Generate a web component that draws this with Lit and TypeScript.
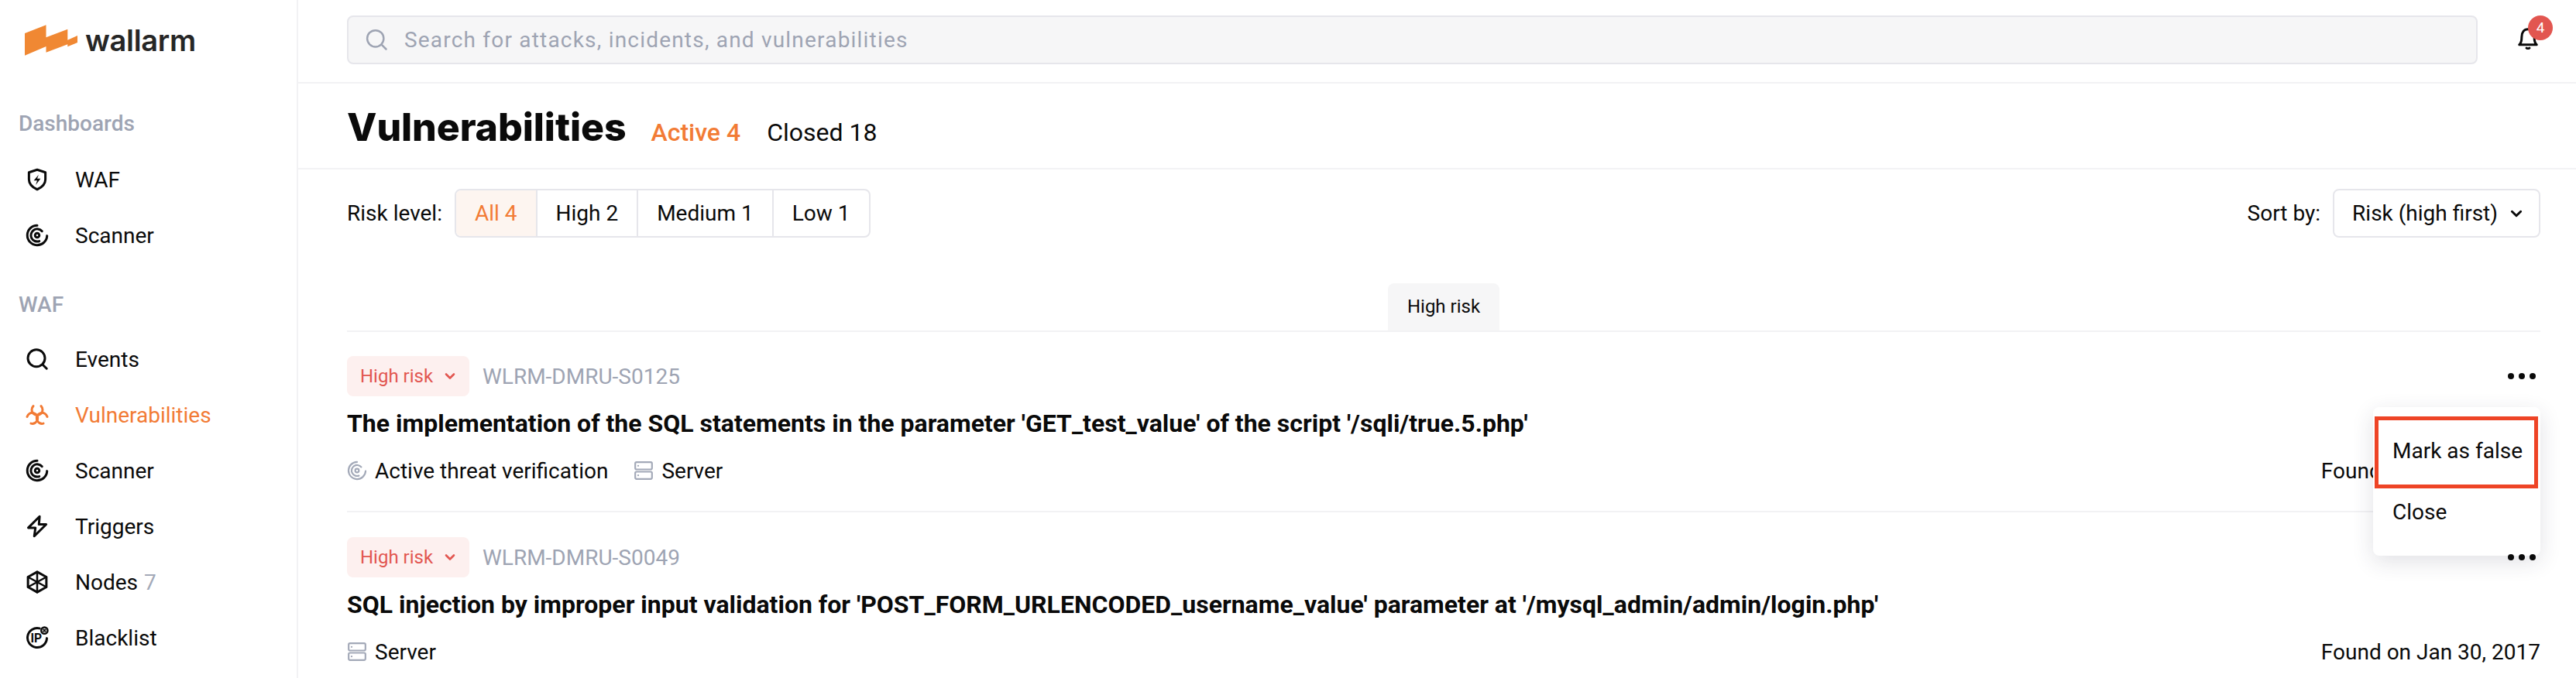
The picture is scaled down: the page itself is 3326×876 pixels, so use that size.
import { LitElement, html, css, svg } from "lit";
import { customElement } from "lit/decorators.js";

const stroke = (body: unknown, size = 30, width = 2.4) => html`<svg
  width=${size} height=${size} viewBox="0 0 24 24" fill="none" stroke="currentColor"
  stroke-width=${width} stroke-linecap="round" stroke-linejoin="round">${body}</svg>`;

const scannerShape = svg`
  <path d="M12 1.8A10.2 10.2 0 1 0 22.2 12.5" />
  <path d="M17 7.8A6.5 6.5 0 1 0 14.2 18.1" />
  <circle cx="12" cy="12" r="2.2" />`;

const serverShape = svg`
  <rect x="2" y="2" width="20" height="8.6" rx="1.6" />
  <rect x="2" y="13.4" width="20" height="8.6" rx="1.6" />
  <path d="M5.5 6.3h.1M5.5 17.7h.1" />`;

const lobe = "M8 2.9A5.6 5.6 0 1 0 16 2.9";

const icons = {
  shield: stroke(svg`
    <path d="M12 1.8l8.5 2.8v7.2c0 4.6-3.4 8.2-8.5 10.4-5.1-2.2-8.5-5.8-8.5-10.4V4.6z" />
    <path d="M13.5 7l-5 6H12l-1.5 4.5 5-6.5H12z" fill="currentColor" stroke="none" />`),
  scanner: stroke(scannerShape),
  search: stroke(svg`<circle cx="11.2" cy="11" r="8.8" /><path d="M17.8 17.8l4 4" />`),
  bio: stroke(svg`
    <path d=${lobe} />
    <path d=${lobe} transform="rotate(120 12 12.6)" />
    <path d=${lobe} transform="rotate(240 12 12.6)" />`),
  triggers: stroke(svg`<path d="M14.5 1.8L2.8 13.5h7.4L9 22.2 21.3 10h-7.5z" />`),
  nodes: stroke(svg`
    <path d="M12 1.5l9.5 5.3v10.4L12 22.5l-9.5-5.3V6.8z" />
    <path d="M12 1.5v21M2.5 6.8l19 10.4M21.5 6.8l-19 10.4" stroke-width="2" />`),
  blacklist: stroke(svg`
    <path d="M14.5 2.3A10 10 0 1 0 22 12.5" />
    <text x="11" y="16.5" text-anchor="middle" fill="currentColor" stroke="none"
      font-family="Roboto, sans-serif" font-size="12.5" font-weight="700">IP</text>
    <circle cx="19.5" cy="4.5" r="3.3" stroke-width="2" />
    <path d="M18.5 3.5l2 2M20.5 3.5l-2 2" stroke-width="1.5" />`),
};

const chevron = (size: number) => html`<svg width=${size} height=${size} viewBox="0 0 16 16"
  fill="none" stroke="currentColor" stroke-width="2.6" stroke-linecap="round" stroke-linejoin="round">
  <path d="M3 5.5l5 5 5-5" /></svg>`;

const navGroups = [
  {
    title: "Dashboards",
    items: [
      { icon: icons.shield, label: "WAF" },
      { icon: icons.scanner, label: "Scanner" },
    ],
  },
  {
    title: "WAF",
    items: [
      { icon: icons.search, label: "Events" },
      { icon: icons.bio, label: "Vulnerabilities", active: true },
      { icon: icons.scanner, label: "Scanner" },
      { icon: icons.triggers, label: "Triggers" },
      { icon: icons.nodes, label: "Nodes", count: "7" },
      { icon: icons.blacklist, label: "Blacklist" },
    ],
  },
];

const filters = ["All 4", "High 2", "Medium 1", "Low 1"];

const rows = [
  {
    id: "WLRM-DMRU-S0125",
    title: "The implementation of the SQL statements in the parameter 'GET_test_value' of the script '/sqli/true.5.php'",
    tags: [
      { shape: scannerShape, label: "Active threat verification" },
      { shape: serverShape, label: "Server" },
    ],
    found: "Found on Jan 30, 2017",
    menu: true,
  },
  {
    id: "WLRM-DMRU-S0049",
    title: "SQL injection by improper input validation for 'POST_FORM_URLENCODED_username_value' parameter at '/mysql_admin/admin/login.php'",
    tags: [{ shape: serverShape, label: "Server" }],
    found: "Found on Jan 30, 2017",
    menu: false,
  },
];

@customElement("app-root")
export class AppRoot extends LitElement {
  static styles = css`
    :host {
      display: flex;
      width: 3326px;
      height: 876px;
      overflow: hidden;
      background: #fff;
      color: #0a0a0a;
      font-family: Roboto, "Liberation Sans", sans-serif;
      font-size: 28px;
    }
    .sidebar {
      flex: none;
      box-sizing: border-box;
      width: 385px;
      border-right: 2px solid #f2f2f4;
    }
    .logo {
      display: flex;
      align-items: flex-start;
      gap: 10px;
      padding: 32px 0 0 32px;
      height: 110px;
      box-sizing: border-box;
    }
    .logo-text {
      font-family: Inter, sans-serif;
      font-weight: 600;
      font-size: 38px;
      line-height: 40px;
      letter-spacing: -0.3px;
      color: #262626;
    }
    .group-title {
      padding-left: 24px;
      margin-top: 32px;
      height: 36px;
      line-height: 36px;
      font-weight: 500;
      color: #9ea4b3;
    }
    .group + .group .group-title {
      margin-top: 36px;
    }
    .nav {
      display: flex;
      flex-direction: column;
      margin-top: 18px;
    }
    .group + .group .nav {
      margin-top: 16px;
    }
    .nav-item {
      display: flex;
      align-items: center;
      height: 72px;
      padding-left: 33px;
      gap: 34px;
    }
    .nav-item.active {
      color: #f27b35;
    }
    .nav-count {
      color: #a3a9b8;
      margin-left: 8px;
    }
    .main {
      flex: 1;
      min-width: 0;
    }
    .topbar {
      display: flex;
      align-items: center;
      box-sizing: border-box;
      height: 108px;
      padding: 0 47px 4px 63px;
      border-bottom: 2px solid #f2f2f4;
    }
    .search {
      flex: 1;
      display: flex;
      align-items: center;
      gap: 21px;
      box-sizing: border-box;
      height: 63px;
      padding-left: 21px;
      background: #f6f6f7;
      border: 2px solid #e6e6eb;
      border-radius: 8px;
      color: #9ea4b3;
      letter-spacing: 1.2px;
    }
    .bell {
      position: relative;
      display: flex;
      margin: 0 0 5px 50px;
    }
    .badge {
      position: absolute;
      top: -14px;
      right: -17px;
      width: 32px;
      height: 32px;
      border-radius: 50%;
      background: #e25650;
      color: #fff;
      font-size: 19px;
      line-height: 32px;
      text-align: center;
    }
    .titlebar {
      display: flex;
      align-items: baseline;
      box-sizing: border-box;
      height: 111px;
      padding: 26px 0 0 63px;
      border-bottom: 2px solid #f2f2f4;
    }
    h1 {
      margin: 0 32px 0 0;
      font-family: Inter, sans-serif;
      font-size: 50px;
      font-weight: 800;
      line-height: 60px;
      letter-spacing: -0.1px;
    }
    .tab-link {
      font-size: 32px;
      margin-right: 34px;
    }
    .tab-link.active {
      color: #f27b35;
      font-weight: 500;
    }
    .filters {
      display: flex;
      align-items: center;
      padding: 25px 46px 0 63px;
    }
    .seg {
      display: flex;
      margin-left: 16px;
      height: 63px;
      box-sizing: border-box;
      border: 2px solid #e6e6eb;
      border-radius: 8px;
      overflow: hidden;
    }
    .seg-item {
      display: flex;
      align-items: center;
      padding: 0 24px;
    }
    .seg-item + .seg-item {
      border-left: 2px solid #e6e6eb;
    }
    .seg-item.active {
      background: #fdf5f0;
      color: #f27b35;
    }
    .sort {
      display: flex;
      align-items: center;
      margin-left: auto;
      gap: 16px;
    }
    .select {
      display: flex;
      align-items: center;
      gap: 15px;
      box-sizing: border-box;
      height: 63px;
      padding: 0 20px 0 23px;
      border: 2px solid #e6e6eb;
      border-radius: 8px;
    }
    .list {
      padding: 0 46px 0 63px;
    }
    .band {
      display: flex;
      justify-content: center;
      margin-top: 59px;
      border-bottom: 2px solid #f2f2f4;
    }
    .band-tab {
      width: 144px;
      height: 61px;
      line-height: 61px;
      text-align: center;
      font-size: 24px;
      background: #f6f6f7;
      border-radius: 8px 8px 0 0;
    }
    .row {
      position: relative;
      padding: 32px 0 34px;
      border-bottom: 2px solid #f2f2f4;
    }
    .band + .row {
      padding-top: 31px;
    }
    .row-head {
      display: flex;
      align-items: center;
      height: 52px;
    }
    .risk {
      display: flex;
      align-items: center;
      gap: 14px;
      box-sizing: border-box;
      width: 158px;
      height: 52px;
      padding-left: 17px;
      background: #fdf0ef;
      border-radius: 8px;
      color: #e25650;
      font-size: 24px;
    }
    .row-id {
      margin-left: 17px;
      color: #9ea4b3;
    }
    .dots {
      display: flex;
      gap: 6px;
      margin: 0 6px 0 auto;
    }
    .dots i {
      width: 8px;
      height: 8px;
      border-radius: 50%;
      background: #0a0a0a;
    }
    .row-title {
      margin-top: 15px;
      font-size: 32px;
      font-weight: 700;
      line-height: 40px;
    }
    .row-meta {
      display: flex;
      align-items: center;
      height: 36px;
      margin-top: 23px;
    }
    .tag {
      display: flex;
      align-items: center;
      gap: 10px;
      margin-right: 33px;
    }
    .tag svg {
      color: #a3a9b8;
    }
    .found {
      margin-left: auto;
    }
    .menu {
      position: absolute;
      top: 97px;
      right: 0;
      width: 216px;
      height: 192px;
      background: #fff;
      border-radius: 8px;
      box-shadow: 0 8px 28px rgba(40, 45, 70, 0.14);
    }
    .menu-item {
      position: absolute;
      left: 25px;
      line-height: 36px;
    }
    .mark {
      position: absolute;
      left: 2px;
      top: 12px;
      width: 211px;
      height: 93px;
      box-sizing: border-box;
      border: 5px solid #ee4426;
    }
  `;

  render() {
    return html`
      <aside class="sidebar">
        <div class="logo">
          <svg width="68" height="40" viewBox="32 32 68 40">
            <polygon fill="#f08833" points="32,43 59.5,32.3 59.5,48.3 87.3,37.7 87.3,51.7 100,46 100,55 87.3,60.3 87.3,57.3 59.5,67.7 59.5,60 32,71.7" />
          </svg>
          <span class="logo-text">wallarm</span>
        </div>
        ${navGroups.map(
          (group) => html`
            <div class="group">
              <div class="group-title">${group.title}</div>
              <div class="nav">
                ${group.items.map(
                  (item: any) => html`
                    <div class="nav-item ${item.active ? "active" : ""}">
                      ${item.icon}
                      <span>${item.label}${item.count
                        ? html`<span class="nav-count">${item.count}</span>`
                        : ""}</span>
                    </div>
                  `
                )}
              </div>
            </div>
          `
        )}
      </aside>
      <main class="main">
        <div class="topbar">
          <div class="search">${stroke(svg`<circle cx="11" cy="11" r="8.5" /><path d="M17.5 17.5l4.5 4.5" />`, 30, 2)}Search for attacks, incidents, and vulnerabilities</div>
          <div class="bell">
            ${stroke(svg`
              <path d="M3 19h18c-2-1.5-2.5-4-2.5-8 0-5-2.5-8-6.5-8s-6.5 3-6.5 8c0 4-.5 6.5-2.500 8z" />
              <path d="M10.5 22.5c1 .7 2 .7 3 0" />`)}
            <span class="badge">4</span>
          </div>
        </div>
        <div class="titlebar">
          <h1>Vulnerabilities</h1>
          <span class="tab-link active">Active 4</span>
          <span class="tab-link">Closed 18</span>
        </div>
        <div class="filters">
          <span>Risk level:</span>
          <div class="seg">
            ${filters.map(
              (f, i) => html`<div class="seg-item ${i === 0 ? "active" : ""}">${f}</div>`
            )}
          </div>
          <div class="sort">
            <span>Sort by:</span>
            <div class="select">Risk (high first) ${chevron(18)}</div>
          </div>
        </div>
        <div class="list">
          <div class="band"><div class="band-tab">High risk</div></div>
          ${rows.map(
            (row) => html`
              <div class="row">
                <div class="row-head">
                  <div class="risk">High risk ${chevron(16)}</div>
                  <span class="row-id">${row.id}</span>
                  <div class="dots"><i></i><i></i><i></i></div>
                </div>
                <div class="row-title">${row.title}</div>
                <div class="row-meta">
                  ${row.tags.map(
                    (t) => html`<span class="tag">${stroke(t.shape, 26, 2)}${t.label}</span>`
                  )}
                  <span class="found">${row.found}</span>
                </div>
                ${row.menu
                  ? html`<div class="menu">
                      <div class="mark"></div>
                      <div class="menu-item" style="top: 39px">Mark as false</div>
                      <div class="menu-item" style="top: 118px">Close</div>
                    </div>`
                  : ""}
              </div>
            `
          )}
        </div>
      </main>
    `;
  }
}
